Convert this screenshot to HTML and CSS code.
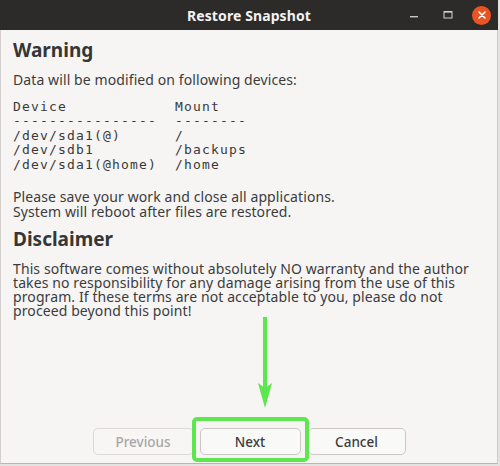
FILE: index.html
```html
<!DOCTYPE html>
<html lang="en">
<head>
    <meta charset="UTF-8">
    <meta name="viewport" content="width=device-width, initial-scale=1.0">
    <title>Restore Snapshot</title>
    <link rel="stylesheet" href="styles.css">
</head>
<body>
    <div class="window">
        <header class="titlebar">
            <span class="title">Restore Snapshot</span>
            <div class="controls">
                <span class="ctl">
                    <svg width="12" height="12" viewBox="0 0 12 12"><rect x="2" y="7" width="8" height="1.4" fill="#c8c8c8"/></svg>
                </span>
                <span class="ctl">
                    <svg width="12" height="12" viewBox="0 0 12 12"><rect x="2" y="2.5" width="8" height="6.5" fill="none" stroke="#d4d4d4" stroke-width="1"/><rect x="2" y="2" width="8" height="1.6" fill="#d4d4d4"/></svg>
                </span>
                <span class="ctl close">
                    <svg width="10" height="10" viewBox="0 0 10 10"><path d="M2 2 L8 8 M8 2 L2 8" stroke="#fff" stroke-width="1.6" stroke-linecap="round"/></svg>
                </span>
            </div>
        </header>

        <main class="content">
            <h2>Warning</h2>
            <p class="intro">Data will be modified on following devices:</p>
<pre class="devices">Device            Mount
----------------  --------
/dev/sda1(@)      /
/dev/sdb1         /backups
/dev/sda1(@home)  /home</pre>
            <p class="notice">Please save your work and close all applications.
System will reboot after files are restored.</p>
            <h2 class="disclaimer-title">Disclaimer</h2>
            <p class="disclaimer">This software comes without absolutely NO warranty and the author takes no responsibility for any damage arising from the use of this program. If these terms are not acceptable to you, please do not proceed beyond this point!</p>
        </main>

        <footer class="actions">
            <button class="btn" disabled>Previous</button>
            <button class="btn">Next</button>
            <button class="btn btn-cancel">Cancel</button>
        </footer>

        <!-- annotation drawn over the dialog -->
        <svg class="arrow" width="20" height="95" viewBox="0 0 20 95">
            <rect x="7" y="2" width="4" height="72" fill="#5de64e"/>
            <polygon points="2,68 9,73 16,68 9,93" fill="#5de64e"/>
        </svg>
        <div class="highlight"></div>
    </div>
</body>
</html>
```

FILE: styles.css
```css
* {
    box-sizing: border-box;
}
body {
    margin: 0;
    background-color: #e4e3e2;
    font-family: "Noto Sans", sans-serif;
    color: #3c3c3c;
}
.window {
    position: relative;
    width: 498px;
    height: 464px;
    display: flex;
    flex-direction: column;
    background: #f6f5f4;
    border-left: 1px solid #d2cfcc;
    border-right: 1px solid #cfcbc8;
    border-bottom: 1px solid #b9b6b3;
}
.titlebar {
    height: 30px;
    flex-shrink: 0;
    display: grid;
    grid-template-columns: 1fr auto 1fr;
    align-items: center;
    background: #2d2b2a;
    color: #f2f2f2;
    margin-left: -1px;
    margin-right: -1px;
}
.title {
    grid-column: 2;
    font-size: 14px;
    font-weight: bold;
    letter-spacing: 0.1px;
}
.controls {
    grid-column: 3;
    justify-self: end;
    display: flex;
    align-items: center;
    gap: 15px;
    padding-right: 7px;
}
.ctl {
    width: 19px;
    height: 19px;
    display: flex;
    align-items: center;
    justify-content: center;
}
.close {
    background: #e95420;
    border-radius: 50%;
}
.content {
    flex: 1;
    padding: 9px 13px 0 12px;
    font-size: 14px;
    letter-spacing: 0.1px;
}
.content h2 {
    margin: 0;
    font-size: 19px;
    line-height: 22px;
    font-weight: bold;
    letter-spacing: 0;
    color: #363636;
}
.content p {
    margin: 0;
    line-height: 14px;
}
.content .intro {
    margin-top: 12px;
}
.devices {
    margin: 13px 0 0;
    font-family: "DejaVu Sans Mono", monospace;
    font-size: 13px;
    letter-spacing: 1.17px;
    line-height: 14.4px;
    color: #3a3a3a;
}
.content .notice {
    margin-top: 18px;
    line-height: 14.5px;
    white-space: pre-line;
}
.content .disclaimer-title {
    margin-top: 9px;
}
.content .disclaimer {
    margin-top: 12px;
}
.actions {
    display: flex;
    justify-content: center;
    gap: 6px;
    padding-bottom: 8px;
}
.btn {
    width: 101px;
    height: 27px;
    font-family: "Noto Sans", sans-serif;
    font-size: 13.5px;
    font-weight: 500;
    color: #3c3c3c;
    background: #f9f9f8;
    border: 1px solid #cdc8c4;
    border-radius: 5px;
}
.btn:disabled {
    color: #a9a7a5;
    background: #f7f6f5;
    border-color: #dcd9d6;
}
.btn-cancel {
    width: 98px;
    margin-left: 1px;
}
.arrow {
    position: absolute;
    left: 255px;
    top: 315px;
}
.highlight {
    position: absolute;
    left: 191px;
    top: 417px;
    width: 117px;
    height: 45px;
    border: 4px solid #5de64e;
    border-radius: 5px;
}
```
